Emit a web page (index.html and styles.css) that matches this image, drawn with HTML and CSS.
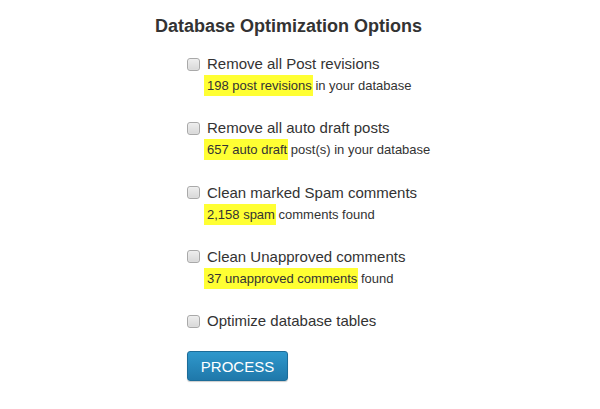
FILE: index.html
```html
<!DOCTYPE html>
<html>
<head>
<meta charset="utf-8">
<link rel="stylesheet" href="styles.css">
</head>
<body>
<div class="panel">
  <h2 class="title">Database Optimization Options</h2>
  <ul class="options">
    <li class="option">
      <label class="label"><span class="box"></span>Remove all Post revisions</label>
      <div class="info"><span class="hl">198 post revisions</span> in your database</div>
    </li>
    <li class="option">
      <label class="label"><span class="box"></span>Remove all auto draft posts</label>
      <div class="info"><span class="hl">657 auto draft</span> post(s) in your database</div>
    </li>
    <li class="option">
      <label class="label"><span class="box"></span>Clean marked Spam comments</label>
      <div class="info"><span class="hl">2,158 spam</span> comments found</div>
    </li>
    <li class="option">
      <label class="label"><span class="box"></span>Clean Unapproved comments</label>
      <div class="info"><span class="hl">37 unapproved comments</span> found</div>
    </li>
    <li class="option last">
      <label class="label"><span class="box"></span>Optimize database tables</label>
    </li>
  </ul>
  <button class="process">PROCESS</button>
</div>
</body>
</html>
```
FILE: styles.css
```css
html, body {
  margin: 0;
  padding: 0;
  background: #ffffff;
}
body {
  width: 600px;
  height: 409px;
  overflow: hidden;
  font-family: "Liberation Sans", Arial, sans-serif;
  color: #333333;
}
.panel {
  padding-top: 14px;
}
.title {
  margin: 0 0 0 155px;
  font-size: 18px;
  font-weight: bold;
  line-height: 24px;
  color: #333333;
}
.options {
  list-style: none;
  margin: 17px 0 0 0;
  padding: 0 0 0 187px;
}
.option {
  height: 64.25px;
}
.option.last {
  height: 39px;
}
.label {
  display: flex;
  align-items: center;
  font-size: 15px;
  line-height: 18px;
  color: #333333;
}
.box {
  box-sizing: border-box;
  width: 13px;
  height: 13px;
  margin-right: 7px;
  border: 1px solid #a9a9a9;
  border-radius: 3px;
  background: linear-gradient(#eeeeee, #d8d8d8);
  box-shadow: inset 0 0 1px #ffffff;
}
.info {
  margin: 2px 0 0 17px;
  font-size: 13px;
  line-height: 21px;
  height: 21px;
  color: #333333;
}
.hl {
  display: inline-block;
  background: #ffff33;
  padding: 0 1px 0 3px;
  margin-right: -1px;
  line-height: 21px;
}
.process {
  margin-left: 187px;
  width: 101px;
  height: 30px;
  border: 1px solid #1c6c98;
  border-radius: 3px;
  background: linear-gradient(#2f98cc, #1f78aa);
  color: #ffffff;
  font-family: "Liberation Sans", Arial, sans-serif;
  font-size: 15px;
  padding: 0;
  box-shadow: 0 1px 1px rgba(0,0,0,0.2);
}
```
